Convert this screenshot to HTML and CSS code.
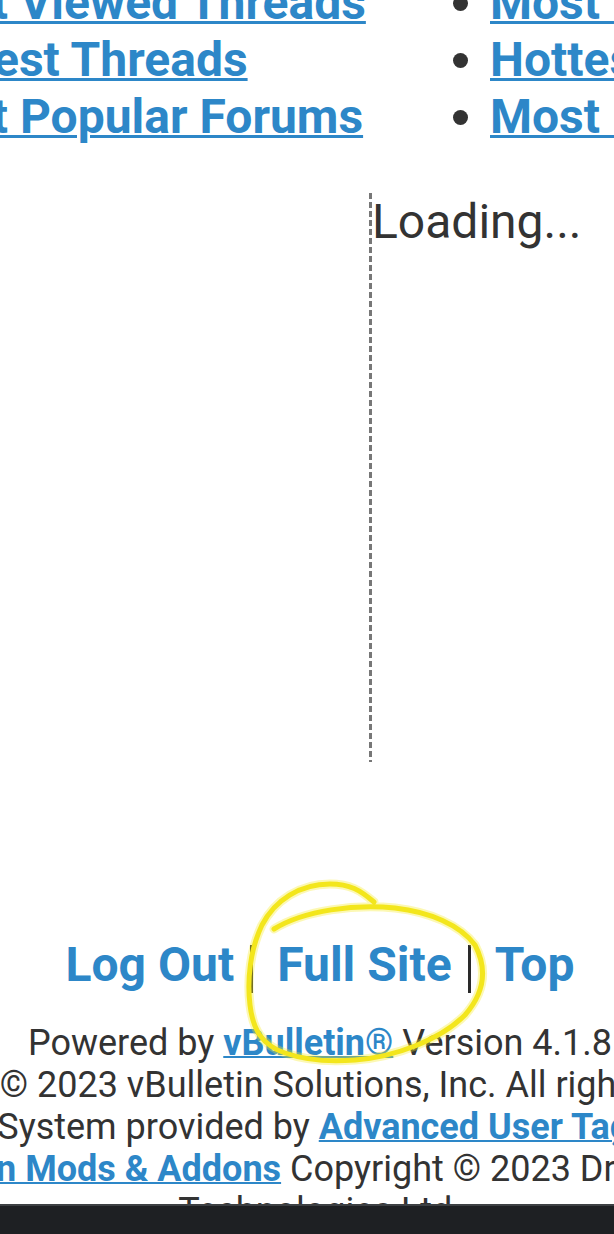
FILE: index.html
```html
<!DOCTYPE html>
<html lang="en">
<head>
    <meta charset="UTF-8">
    <meta name="viewport" content="width=device-width, initial-scale=1.0">
    <title>Forum - Mobile</title>
    <link rel="stylesheet" href="styles.css">
</head>
<body>
    <div class="page">
        <div class="stats">
            <ul class="stat-list">
                <li><a href="#">Most Viewed Threads</a></li>
                <li><a href="#">Newest Threads</a></li>
                <li><a href="#">Most Popular Forums</a></li>
            </ul>
            <ul class="stat-list">
                <li><a href="#">Most Viewed Blogs</a></li>
                <li><a href="#">Hottest Blogs</a></li>
                <li><a href="#">Most Popular Tags</a></li>
            </ul>
        </div>

        <div class="widgets">
            <div class="widget-slot"></div>
            <div class="widget-box">Loading...</div>
        </div>

        <div class="footer-nav">
            <a href="#">Log Out</a>
            <span class="sep"></span>
            <a href="#">Full Site</a>
            <span class="sep"></span>
            <a href="#">Top</a>
        </div>

        <div class="copyright">
            Powered by <a href="#">vBulletin&reg;</a> Version 4.1.8<br>
            Copyright &copy; 2023 vBulletin Solutions, Inc. All rights reserved.<br>
            User Alert System provided by <a href="#">Advanced User Tagging (Lite)</a> -<br>
            <a href="#">vBulletin Mods &amp; Addons</a> Copyright &copy; 2023 DragonByte<br>
            Technologies Ltd.
        </div>
    </div>

    <!-- hand-drawn highlight around "Full Site" -->
    <svg class="scribble" width="614" height="1234" viewBox="0 0 614 1234">
        <path class="scribble-glow" d="M374,902 C360,890 350,884 330,884 C300,884 275,900 262,925 C250,950 247,980 250,1005 C253,1030 262,1045 285,1053 C305,1060 330,1062 355,1060 C395,1057 440,1040 465,1015 C485,992 487,968 475,945 C460,925 430,912 395,908 C355,904 305,910 274,929"/>
        <path class="scribble-line" d="M374,902 C360,890 350,884 330,884 C300,884 275,900 262,925 C250,950 247,980 250,1005 C253,1030 262,1045 285,1053 C305,1060 330,1062 355,1060 C395,1057 440,1040 465,1015 C485,992 487,968 475,945 C460,925 430,912 395,908 C355,904 305,910 274,929"/>
    </svg>

    <div class="nav-bar"></div>
</body>
</html>
```

FILE: styles.css
```css
html, body {
    margin: 0;
    overflow: hidden;
}

body {
    font-family: Roboto, "Noto Sans", sans-serif;
    color: #333;
    background: #fff;
    height: 1234px;
}

a {
    color: #2d87c8;
    font-weight: 700;
    text-decoration: underline;
    text-decoration-thickness: 3px;
}

.page {
    width: 980px;
    margin-left: -170px;
}

.stats {
    display: grid;
    grid-template-columns: 592px 592px;
    margin-top: -26px;
}

.stat-list {
    margin: 0;
    padding-left: 68px;
    font-size: 48px;
    line-height: 57px;
    white-space: nowrap;
}

.widgets {
    display: flex;
    margin-top: 48px;
    height: 569px;
}

.widget-slot {
    width: 539px;
    flex: none;
}

.widget-box {
    flex: 1;
    padding-left: 3px;
    font-size: 48px;
    line-height: 57px;
    color: #333;
    background: repeating-linear-gradient(to bottom, #777 0 6px, transparent 6px 9px) left top / 3px 100% no-repeat;
}

.footer-nav {
    display: flex;
    justify-content: center;
    align-items: center;
    margin-top: 174px;
    font-size: 48px;
    line-height: 57px;
}

.footer-nav a {
    text-decoration: none;
}

.sep {
    width: 3px;
    height: 48px;
    background: #2a2a2a;
    margin: 8px 24px 0 16px;
}

.copyright {
    margin-top: 29px;
    text-align: center;
    font-size: 36px;
    line-height: 42px;
    white-space: nowrap;
}

.copyright a {
    text-decoration-thickness: 2px;
}

.scribble {
    position: absolute;
    left: 0;
    top: 0;
    pointer-events: none;
}

.scribble path {
    fill: none;
    stroke-linecap: round;
    stroke-linejoin: round;
}

.scribble-glow {
    stroke: rgba(245, 235, 40, 0.35);
    stroke-width: 9;
}

.scribble-line {
    stroke: #f3e61c;
    stroke-width: 5;
}

.nav-bar {
    position: fixed;
    left: 0;
    right: 0;
    bottom: 0;
    height: 28px;
    background: #1e2023;
    border-top: 2px solid #3d4043;
}
```
